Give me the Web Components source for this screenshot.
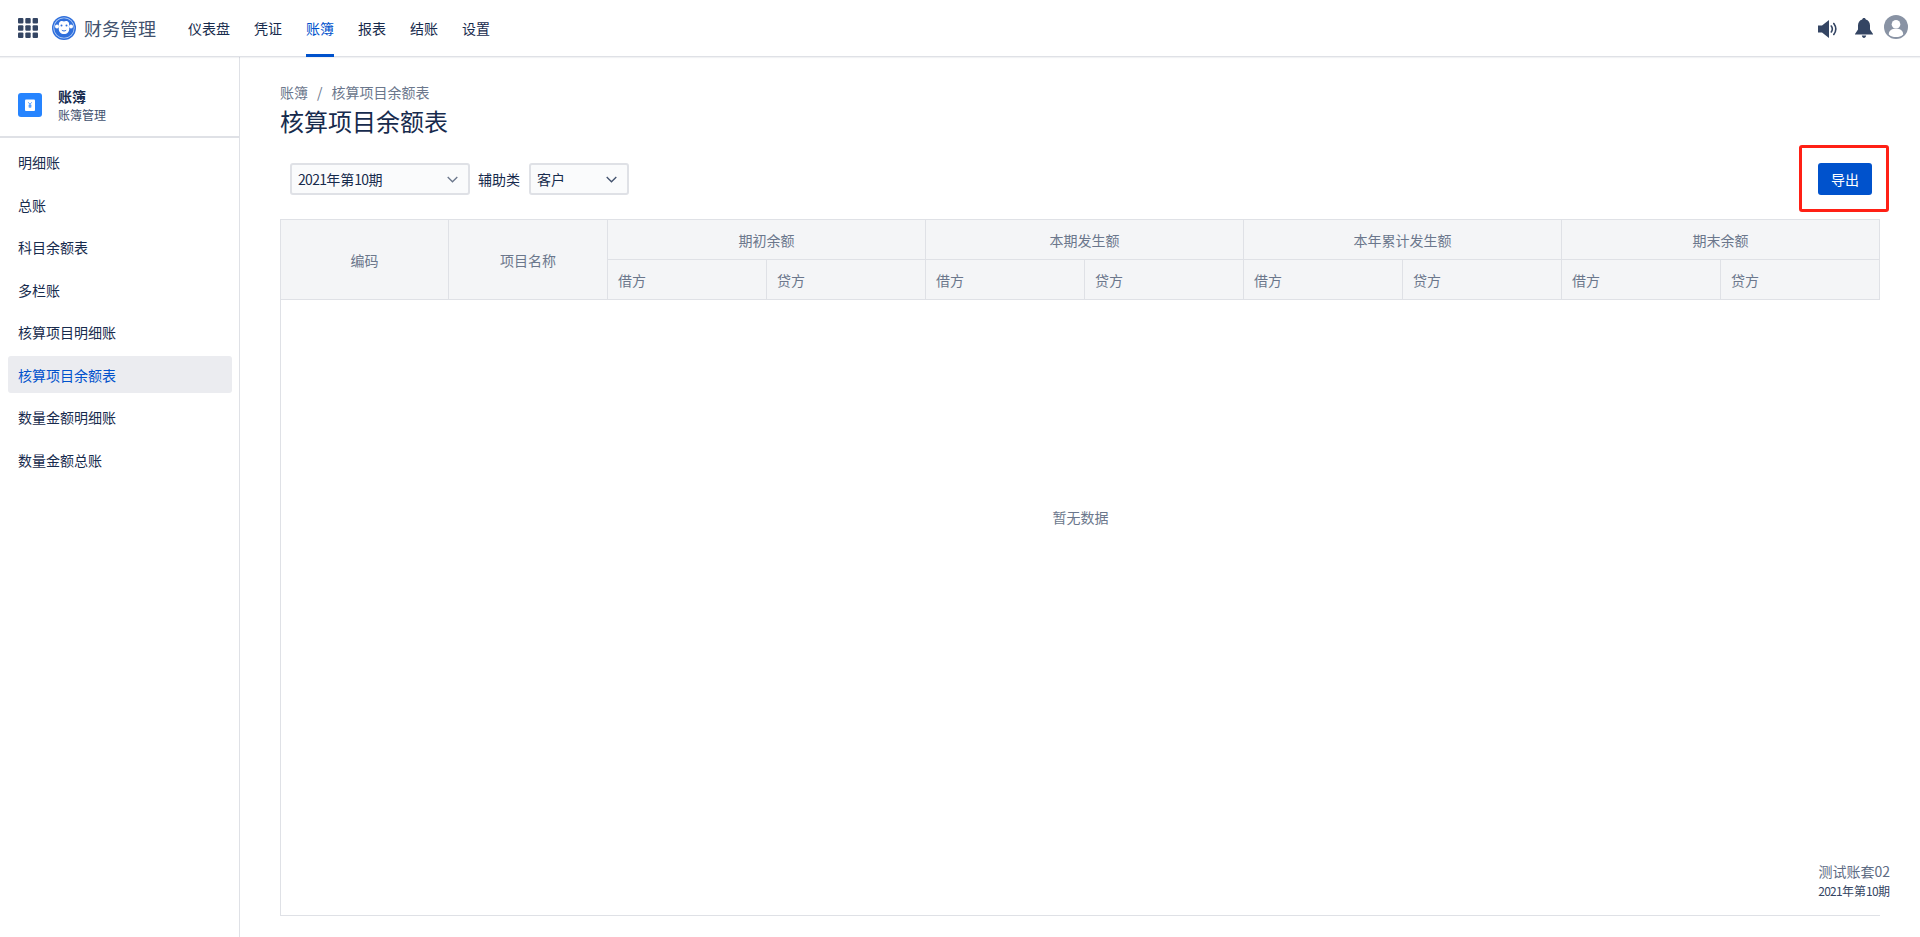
<!DOCTYPE html>
<html lang="zh">
<head>
<meta charset="utf-8">
<title>核算项目余额表</title>
<style>
    html, body {
        margin: 0;
        height: 100%;
        overflow: hidden;
    }
    body {
        font-family: "Noto Sans CJK SC", "Noto Sans", sans-serif;
        font-size: 14px;
        color: #172b4d;
        background: #fff;
    }
</style>
</head>
<body>
<app-shell>
    <top-bar slot="top" title-text="财务管理">
        <top-link>仪表盘</top-link>
        <top-link>凭证</top-link>
        <top-link active>账簿</top-link>
        <top-link>报表</top-link>
        <top-link>结账</top-link>
        <top-link>设置</top-link>
    </top-bar>
    <side-nav slot="side" heading="账簿" sub="账簿管理">
        <side-item>明细账</side-item>
        <side-item>总账</side-item>
        <side-item>科目余额表</side-item>
        <side-item>多栏账</side-item>
        <side-item>核算项目明细账</side-item>
        <side-item active>核算项目余额表</side-item>
        <side-item>数量金额明细账</side-item>
        <side-item>数量金额总账</side-item>
    </side-nav>
    <balance-page></balance-page>
</app-shell>

<script>
class AppShell extends HTMLElement {
    connectedCallback() {
        const root = this.attachShadow({mode: 'open'});
        root.innerHTML = `
            <style>
                :host {
                    display: flex;
                    flex-direction: column;
                    height: 937px;
                }
                .below {
                    display: flex;
                    flex: 1;
                    min-height: 0;
                }
                main {
                    flex: 1;
                    min-width: 0;
                }
            </style>
            <slot name="top"></slot>
            <div class="below">
                <slot name="side"></slot>
                <main><slot></slot></main>
            </div>
        `;
    }
}

class TopBar extends HTMLElement {
    connectedCallback() {
        const root = this.attachShadow({mode: 'open'});
        root.innerHTML = `
            <style>
                :host {
                    display: flex;
                    align-items: center;
                    height: 56px;
                    padding: 0 12px 0 18px;
                    border-bottom: 1px solid #dfe1e6;
                    box-shadow: 0 1px 1px rgba(9, 30, 66, 0.06);
                    position: relative;
                    z-index: 1;
                }
                .apps {
                    display: block;
                    width: 20px;
                    height: 20px;
                    margin-right: 14px;
                }
                .logo {
                    display: block;
                    width: 24px;
                    height: 24px;
                    margin-right: 8px;
                }
                .name {
                    font-size: 18px;
                    color: #42526e;
                    width: 72px;
                    margin-right: 32px;
                    white-space: nowrap;
                }
                nav {
                    display: flex;
                    gap: 24px;
                    height: 100%;
                    flex: 1;
                }
                .tools {
                    display: flex;
                    align-items: center;
                }
                .tools svg {
                    display: block;
                }
            </style>
            <svg class="apps" viewBox="0 0 20 20" fill="#344563">
                <rect x="0" y="0" width="5.4" height="5.4" rx="1"/>
                <rect x="7.3" y="0" width="5.4" height="5.4" rx="1"/>
                <rect x="14.6" y="0" width="5.4" height="5.4" rx="1"/>
                <rect x="0" y="7.3" width="5.4" height="5.4" rx="1"/>
                <rect x="7.3" y="7.3" width="5.4" height="5.4" rx="1"/>
                <rect x="14.6" y="7.3" width="5.4" height="5.4" rx="1"/>
                <rect x="0" y="14.6" width="5.4" height="5.4" rx="1"/>
                <rect x="7.3" y="14.6" width="5.4" height="5.4" rx="1"/>
                <rect x="14.6" y="14.6" width="5.4" height="5.4" rx="1"/>
            </svg>
            <svg class="logo" viewBox="0 0 24 24">
                <circle cx="12" cy="12" r="12" fill="#2f6fdc"/>
                <circle cx="12" cy="12" r="10.6" fill="#b5cff5"/>
                <circle cx="12" cy="12" r="9.8" fill="#2f6fdc"/>
                <circle cx="5" cy="10.6" r="2" fill="#fff"/>
                <circle cx="19" cy="10.6" r="2" fill="#fff"/>
                <path d="M12 5.600c1.200-.9 3.600-.9 4.600.7 1 1.500.5 3.200.2 4.200.9 2.400.5 4.400-.9 5.900-1 1.100-2.400 1.700-3.900 1.700s-2.900-.6-3.900-1.700c-1.400-1.500-1.800-3.500-.9-5.900-.3-1-.8-2.700.2-4.200 1-1.600 3.400-1.600 4.600-.7z" fill="#fff"/>
                <circle cx="9.500" cy="9.400" r="1" fill="#2f6fdc"/>
                <circle cx="14.500" cy="9.400" r="1" fill="#2f6fdc"/>
                <path d="M9.800 14.200c1.300 1 3.100 1 4.400 0" fill="none" stroke="#2f6fdc" stroke-width="1"/>
            </svg>
            <span class="name">${this.getAttribute('title-text')}</span>
            <nav><slot></slot></nav>
            <div class="tools">
                <svg width="20" height="18" viewBox="0 0 20 18" style="margin:2px 17px 0 0">
                    <path d="M0 5.500h4L11 0v18l-7-5.500H0z" fill="#344563"/>
                    <path d="M13.300 6c1.300 1.900 1.300 4.100 0 6M15.800 3.500c2.500 3.400 2.500 7.600 0 11" fill="none" stroke="#344563" stroke-width="1.600" stroke-linecap="round"/>
                </svg>
                <svg width="18" height="20" viewBox="0 0 18 20" style="margin-right:11px">
                    <path d="M9 0c1 0 1.700.7 1.800 1.600 2.700.8 4.200 3 4.200 6v3.900l3 4.400v.6H0v-.6l3-4.400V7.600c0-3 1.500-5.200 4.200-6C7.300.7 8 0 9 0z" fill="#344563"/>
                    <path d="M6.800 17.500h4.400c-.3 1.500-1.100 2.500-2.200 2.500s-1.900-1-2.200-2.500z" fill="#344563"/>
                </svg>
                <svg width="24" height="24" viewBox="0 0 24 24" style="margin-top:-2px">
                    <circle cx="12" cy="12" r="12" fill="#8993a4"/>
                    <circle cx="12" cy="9.300" r="4.300" fill="#fff"/>
                    <path d="M4.800 19.400c0-3.600 2.600-5.600 7.200-5.600s7.200 2 7.200 5.600c-1.800 1.700-4.400 2.700-7.200 2.700s-5.400-1-7.200-2.700z" fill="#fff"/>
                </svg>
            </div>
        `;
    }
}

class TopLink extends HTMLElement {
    connectedCallback() {
        const root = this.attachShadow({mode: 'open'});
        root.innerHTML = `
            <style>
                :host {
                    display: flex;
                    align-items: center;
                    position: relative;
                    font-size: 14px;
                    color: #172b4d;
                    white-space: nowrap;
                }
                :host([active]) {
                    color: #0052cc;
                }
                :host([active])::after {
                    content: "";
                    position: absolute;
                    left: 0;
                    right: 0;
                    bottom: -1px;
                    height: 3px;
                    background: #0052cc;
                }
            </style>
            <slot></slot>
        `;
    }
}

class SideNav extends HTMLElement {
    connectedCallback() {
        const root = this.attachShadow({mode: 'open'});
        root.innerHTML = `
            <style>
                :host {
                    display: block;
                    box-sizing: border-box;
                    width: 240px;
                    flex: none;
                    border-right: 1px solid #dfe1e6;
                }
                header {
                    display: flex;
                    align-items: center;
                    gap: 16px;
                    height: 81px;
                    padding: 17px 18px 0;
                    box-sizing: border-box;
                    border-bottom: 2px solid #dfe1e6;
                    margin-bottom: 5.500px;
                }
                .badge {
                    display: block;
                    width: 24px;
                    height: 24px;
                    flex: none;
                }
                .text {
                    margin-top: -2px;
                }
                h2 {
                    margin: 0;
                    font-size: 14px;
                    line-height: 20px;
                    font-weight: 700;
                    color: #172b4d;
                }
                p {
                    margin: 0;
                    font-size: 12px;
                    line-height: 17px;
                    color: #42526e;
                }
                .items {
                    display: flex;
                    flex-direction: column;
                    gap: 5.500px;
                    padding: 0 7px 0 8px;
                }
            </style>
            <header>
                <svg class="badge" viewBox="0 0 24 24">
                    <rect width="24" height="24" rx="3" fill="#2684ff"/>
                    <rect x="7" y="6.500" width="10" height="11.500" rx="1" fill="#fff"/>
                    <path d="M10.300 9.300l1.700 2 1.700-2M12 11.300v3.700M10.500 12.300h3M10.500 13.800h3" fill="none" stroke="#2684ff" stroke-width=".8"/>
                </svg>
                <div class="text">
                    <h2>${this.getAttribute('heading')}</h2>
                    <p>${this.getAttribute('sub')}</p>
                </div>
            </header>
            <div class="items"><slot></slot></div>
        `;
    }
}

class SideItem extends HTMLElement {
    connectedCallback() {
        const root = this.attachShadow({mode: 'open'});
        root.innerHTML = `
            <style>
                :host {
                    display: flex;
                    align-items: center;
                    height: 37px;
                    padding: 0 10px;
                    border-radius: 3px;
                    font-size: 14px;
                    color: #172b4d;
                }
                :host([active]) {
                    background: #ebecf0;
                    color: #0052cc;
                }
            </style>
            <slot></slot>
        `;
    }
}

class SelectBox extends HTMLElement {
    connectedCallback() {
        const root = this.attachShadow({mode: 'open'});
        root.innerHTML = `
            <style>
                :host {
                    display: flex;
                    align-items: center;
                    justify-content: space-between;
                    box-sizing: border-box;
                    height: 32px;
                    padding: 0 10px 0 6px;
                    background: #fafbfc;
                    border: 2px solid #dfe1e6;
                    border-radius: 3px;
                    font-size: 14px;
                    color: #172b4d;
                    white-space: nowrap;
                }
                svg {
                    display: block;
                }
            </style>
            <span><slot></slot></span>
            <svg width="11" height="7" viewBox="0 0 11 7">
                <path d="M.7 1l4.800 4.800L10.300 1" fill="none" stroke="var(--chevron, #6b778c)" stroke-width="1.300"/>
            </svg>
        `;
    }
}

class BalanceTable extends HTMLElement {
    connectedCallback() {
        const root = this.attachShadow({mode: 'open'});
        const groups = ['期初余额', '本期发生额', '本年累计发生额', '期末余额'];
        const groupCells = groups.map(g => `<div class="cell group">${g}</div>`).join('');
        const sideCells = groups.map(() => `<div class="cell side">借方</div><div class="cell side">贷方</div>`).join('');
        root.innerHTML = `
            <style>
                :host {
                    display: flex;
                    flex-direction: column;
                    flex: 1;
                    min-height: 0;
                    font-size: 14px;
                }
                .head {
                    display: grid;
                    grid-template-columns: 168px repeat(8, 159px) 1fr;
                    grid-template-rows: 40px 39px;
                    background: #f4f5f7;
                    border: 1px solid #dfe1e6;
                    color: #6b778c;
                }
                .cell {
                    display: flex;
                    align-items: center;
                    justify-content: center;
                    box-sizing: border-box;
                    border-right: 1px solid #dfe1e6;
                }
                .code, .name {
                    grid-row: 1 / span 2;
                }
                .group {
                    grid-column: span 2;
                    border-bottom: 1px solid #dfe1e6;
                }
                .side {
                    justify-content: flex-start;
                    padding-left: 10px;
                }
                .head > .cell:nth-child(6),
                .head > .cell:last-child {
                    border-right: 0;
                }
                .empty {
                    flex: 1;
                    display: flex;
                    align-items: center;
                    justify-content: center;
                    padding-bottom: 181px;
                    border-left: 1px solid #dfe1e6;
                    border-bottom: 1px solid #dfe1e6;
                    color: #6b778c;
                }
            </style>
            <div class="head">
                <div class="cell code">编码</div>
                <div class="cell name">项目名称</div>
                ${groupCells}
                ${sideCells}
            </div>
            <div class="empty">暂无数据</div>
        `;
    }
}

class BalancePage extends HTMLElement {
    connectedCallback() {
        const root = this.attachShadow({mode: 'open'});
        root.innerHTML = `
            <style>
                :host {
                    display: flex;
                    flex-direction: column;
                    box-sizing: border-box;
                    height: 100%;
                    padding: 25px 40px 21px 40px;
                    position: relative;
                }
                .crumbs {
                    display: flex;
                    gap: 9px;
                    font-size: 14px;
                    line-height: 20px;
                    color: #6b778c;
                }
                h1 {
                    margin: 3px 0 0;
                    font-size: 24px;
                    line-height: 32px;
                    font-weight: 400;
                    color: #172b4d;
                }
                .bar {
                    display: flex;
                    align-items: center;
                    padding: 0 8px 0 10px;
                    margin: 26px 0 24px;
                }
                .label {
                    margin: 0 9px 0 8px;
                    font-size: 14px;
                    color: #172b4d;
                }
                .grow {
                    flex: 1;
                }
                .num {
                    letter-spacing: -0.7px;
                }
                button {
                    width: 54px;
                    height: 32px;
                    padding: 0;
                    border: 0;
                    border-radius: 3px;
                    background: #0052cc;
                    color: #fff;
                    font: inherit;
                    font-size: 14px;
                }
                /* annotation drawn over the screenshot */
                .mark {
                    position: absolute;
                    left: 1559px;
                    top: 88px;
                    width: 90px;
                    height: 67px;
                    box-sizing: border-box;
                    border: 3px solid #ff2015;
                    border-radius: 3px;
                    pointer-events: none;
                }
                .ledger {
                    position: absolute;
                    right: 30px;
                    top: 804px;
                    text-align: right;
                    white-space: nowrap;
                }
                .ledger div:first-child {
                    font-size: 14px;
                    line-height: 20px;
                    color: #5e6c84;
                }
                .ledger div:last-child {
                    font-size: 12px;
                    line-height: 20px;
                    color: #344563;
                }
            </style>
            <div class="crumbs"><span>账簿</span><span>/</span><span>核算项目余额表</span></div>
            <h1>核算项目余额表</h1>
            <div class="bar">
                <select-box style="width:180px"><span class="num">2021</span>年第<span class="num">10</span>期</select-box>
                <span class="label">辅助类</span>
                <select-box style="width:100px;--chevron:#42526e">客户</select-box>
                <span class="grow"></span>
                <button>导出</button>
            </div>
            <balance-table></balance-table>
            <div class="mark"></div>
            <div class="ledger">
                <div>测试账套02</div>
                <div><span class="num">2021</span>年第<span class="num">10</span>期</div>
            </div>
        `;
    }
}

customElements.define('app-shell', AppShell);
customElements.define('top-bar', TopBar);
customElements.define('top-link', TopLink);
customElements.define('side-nav', SideNav);
customElements.define('side-item', SideItem);
customElements.define('select-box', SelectBox);
customElements.define('balance-table', BalanceTable);
customElements.define('balance-page', BalancePage);
</script>
</body>
</html>
